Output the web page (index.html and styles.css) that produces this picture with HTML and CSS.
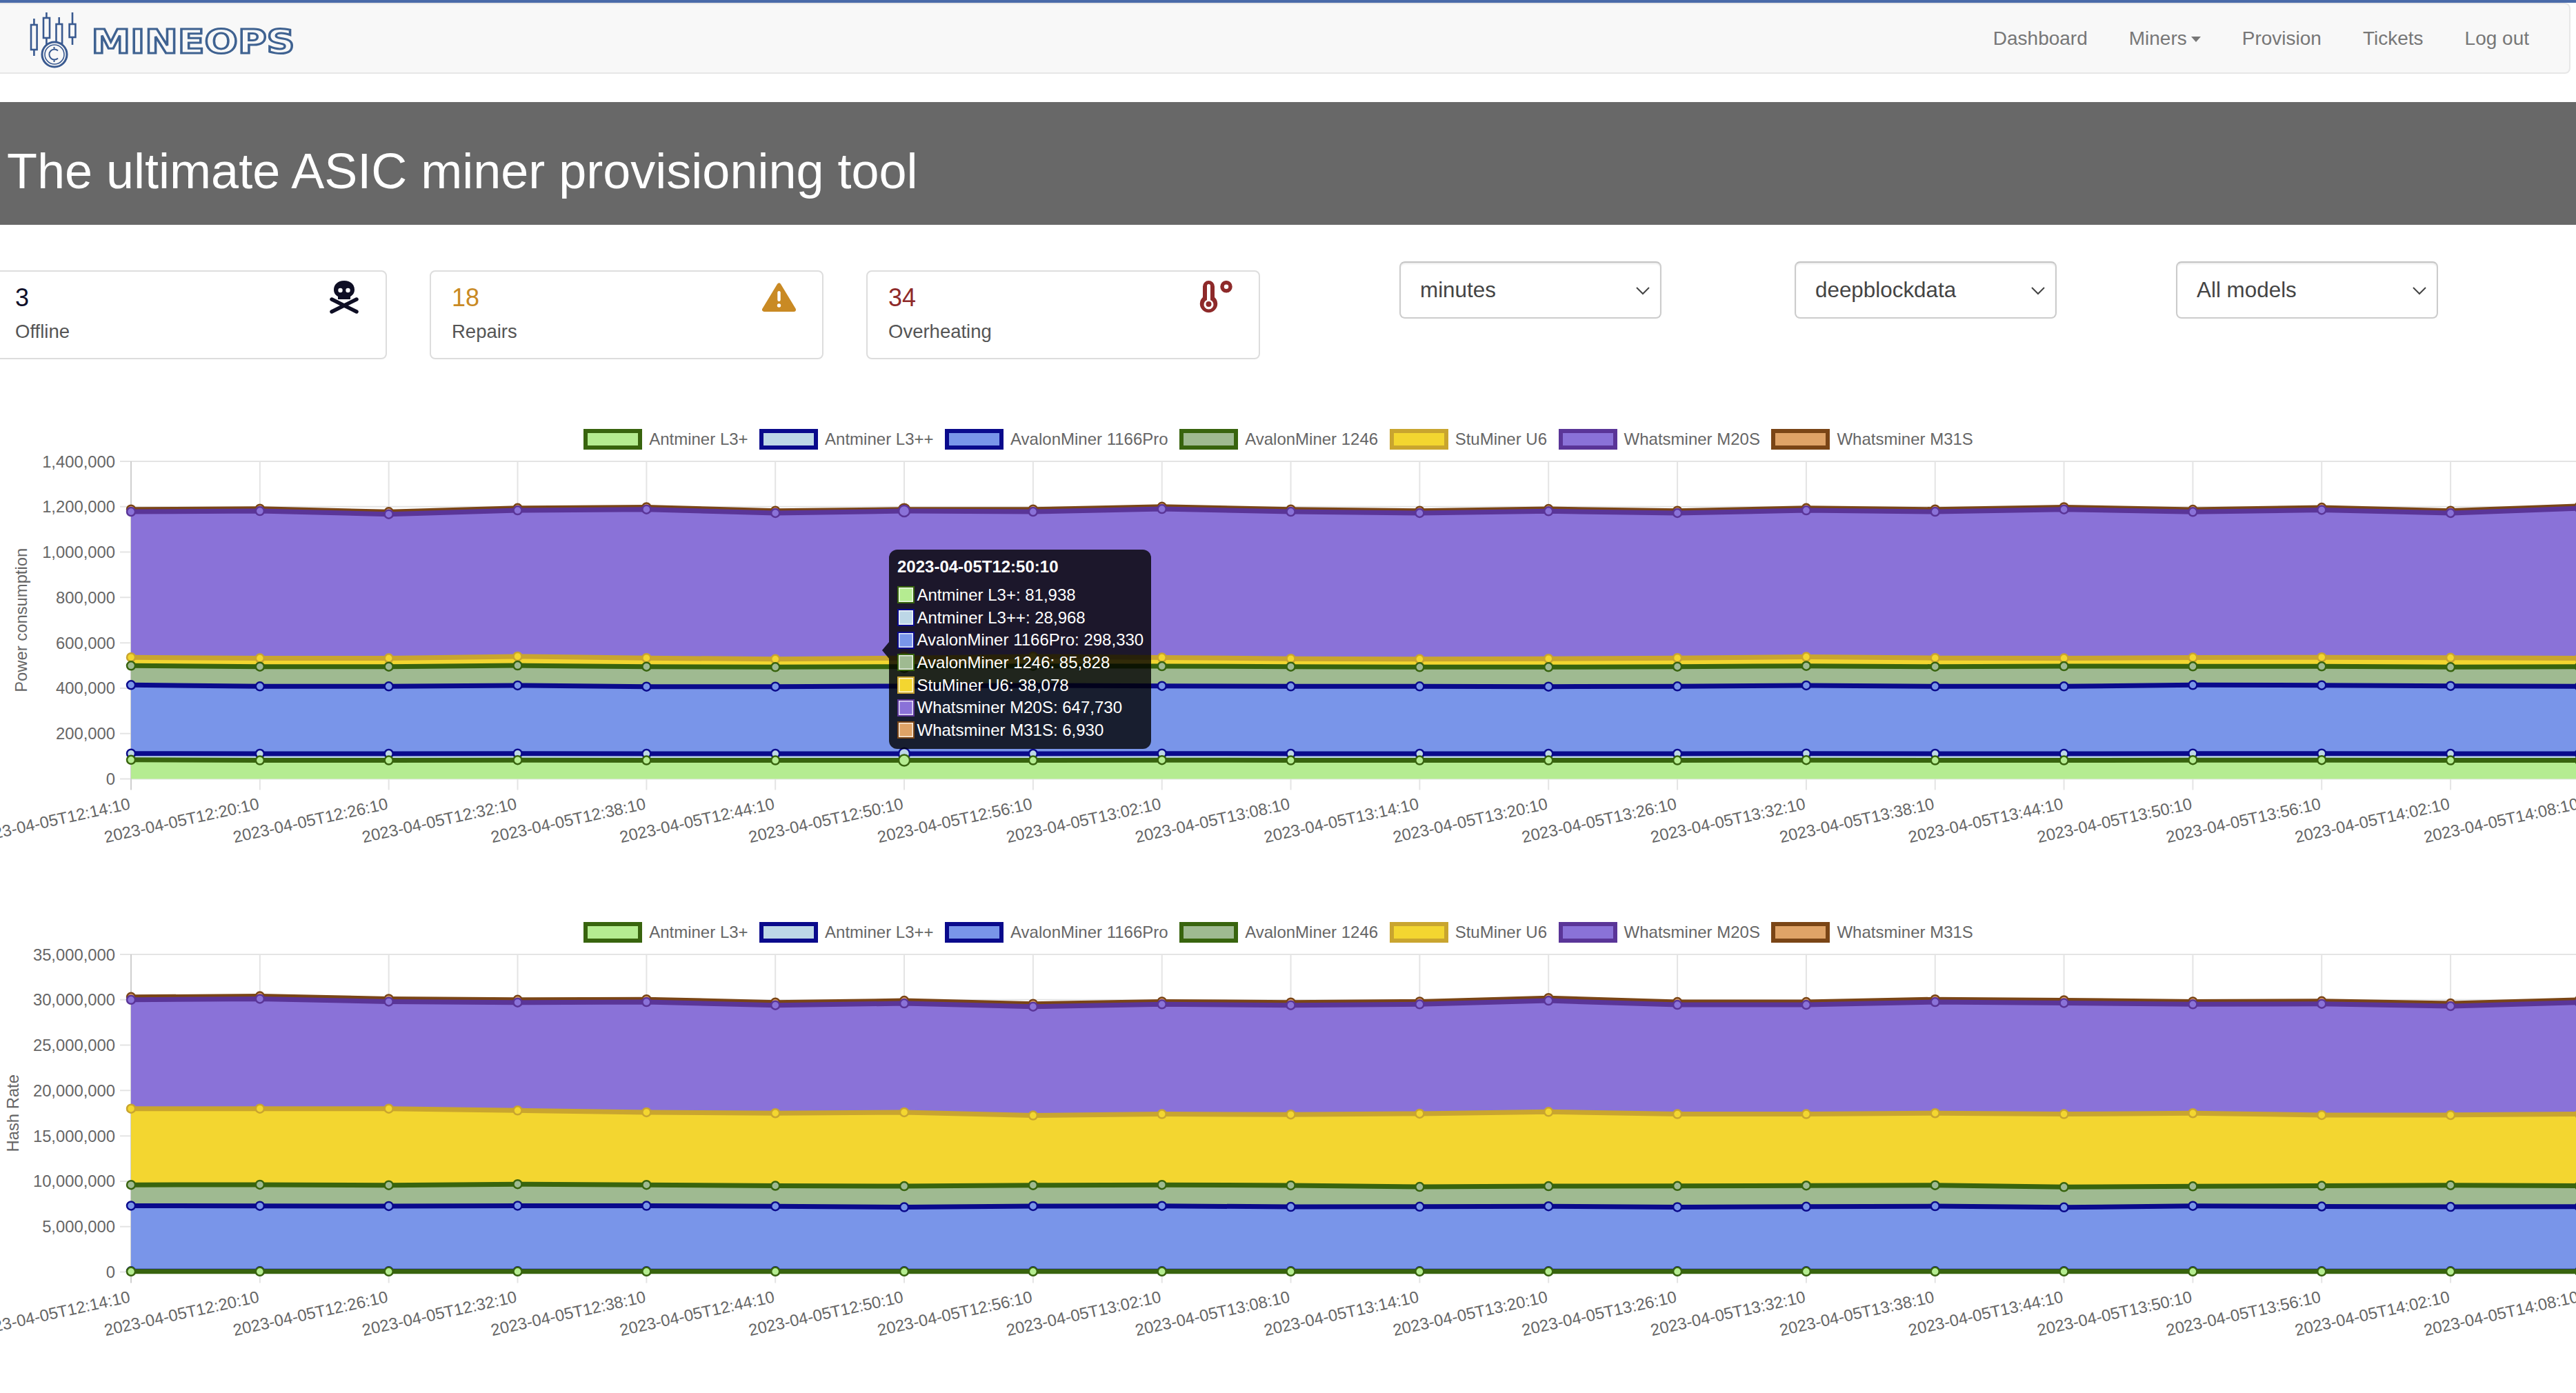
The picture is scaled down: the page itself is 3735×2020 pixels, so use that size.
FILE: index.html
```html
<!DOCTYPE html>
<html lang="en">
<head>
  <meta charset="UTF-8">
  <title>MineOps</title>
  <link rel="stylesheet" href="styles.css">
</head>
<body>

  <div class="topbar"></div>

  <nav class="navbar">
    <svg class="logo" viewBox="0 6 440 99" width="440" height="99">
      <g fill="none" stroke="#3a5a90" stroke-width="2.6">
        <path d="M49.4 27V36M49.4 72V81M67.4 18V26M67.4 55V65M85.7 25V35M85.7 63V70M105 18V35M105 54V65"/>
        <rect x="45" y="36" width="8.6" height="36"/>
        <rect x="63" y="26" width="9" height="29"/>
        <rect x="81.5" y="35" width="8.6" height="28"/>
        <rect x="100.6" y="35" width="8.8" height="19"/>
        <circle cx="79" cy="79" r="18" fill="#f8f8f8" stroke-width="3"/>
        <circle cx="79" cy="79" r="14" stroke-width="1.6"/>
        <path d="M84 73.5A7.5 7.5 0 1 0 84 84.5M78.5 68V71M78.5 87V90" stroke-width="2"/>
      </g>
      <text class="logo-word" x="132.500" y="76.500" textLength="295" lengthAdjust="spacingAndGlyphs">MINEOPS</text>
    </svg>
    <ul class="nav-links">
      <li><a href="#">Dashboard</a></li>
      <li><a href="#">Miners<span class="caret"></span></a></li>
      <li><a href="#">Provision</a></li>
      <li><a href="#">Tickets</a></li>
      <li><a href="#">Log out</a></li>
    </ul>
  </nav>

  <div class="banner">
    <h1>The ultimate ASIC miner provisioning tool</h1>
  </div>

  <div class="stats">
    <div class="stat-card">
      <div>
        <div class="stat-value offline">3</div>
        <div class="stat-label">Offline</div>
      </div>
      <svg class="stat-icon" viewBox="0 0 43 48" width="43" height="48">
        <path fill="#0e0e24" d="M21 0C11.500 0 6 6 6 13C6 18 8.500 21 12 23V27H30V23C33.500 21 36 18 36 13C36 6 30.500 0 21 0Z"/>
        <circle cx="15.500" cy="14" r="3.200" fill="#fff"/>
        <circle cx="26.500" cy="14" r="3.200" fill="#fff"/>
        <path stroke="#0e0e24" stroke-width="5.500" stroke-linecap="round" d="M3 27L39 45M39 27L3 45"/>
      </svg>
    </div>
    <div class="stat-card">
      <div>
        <div class="stat-value repairs">18</div>
        <div class="stat-label">Repairs</div>
      </div>
      <svg class="stat-icon" viewBox="0 0 49 48" width="49" height="48">
        <path fill="#c98a24" stroke="#c98a24" stroke-width="6" stroke-linejoin="round" d="M24.500 6.500L3 42H46Z"/>
        <rect x="22.300" y="15" width="4.400" height="15" rx="2.200" fill="#fff"/>
        <circle cx="24.500" cy="36" r="2.700" fill="#fff"/>
      </svg>
    </div>
    <div class="stat-card">
      <div>
        <div class="stat-value overheating">34</div>
        <div class="stat-label">Overheating</div>
      </div>
      <svg class="stat-icon" viewBox="0 0 48 48" width="48" height="48">
        <path fill="#8e2a2a" d="M5 8.500a8.500 8.500 0 0 1 17 0V24a12.700 12.700 0 1 1-17 0Z"/>
        <path fill="#fff" d="M11 7.500a2.500 2.500 0 0 1 5 0V28a7 7 0 1 1-5 0Z"/>
        <circle cx="13.500" cy="34" r="4" fill="#8e2a2a"/>
        <circle cx="39" cy="8.700" r="6" fill="none" stroke="#8e2a2a" stroke-width="5.500"/>
      </svg>
    </div>
    <div class="filters">
      <select class="filter"><option>minutes</option></select>
      <select class="filter"><option>deepblockdata</option></select>
      <select class="filter"><option>All models</option></select>
    </div>
  </div>

  <!-- Power consumption -->
  <section class="chart-block">
    <ul class="legend">
      <li class="m-l3p">Antminer L3+</li>
      <li class="m-l3pp">Antminer L3++</li>
      <li class="m-a1166">AvalonMiner 1166Pro</li>
      <li class="m-a1246">AvalonMiner 1246</li>
      <li class="m-u6">StuMiner U6</li>
      <li class="m-m20s">Whatsminer M20S</li>
      <li class="m-m31s">Whatsminer M31S</li>
    </ul>
    <svg id="power-chart" class="chart" width="3735" height="650"></svg>

    <div class="chart-tip">
      <div class="tip-title">2023-04-05T12:50:10</div>
      <div class="tip-row m-l3p">Antminer L3+: 81,938</div>
      <div class="tip-row m-l3pp">Antminer L3++: 28,968</div>
      <div class="tip-row m-a1166">AvalonMiner 1166Pro: 298,330</div>
      <div class="tip-row m-a1246">AvalonMiner 1246: 85,828</div>
      <div class="tip-row m-u6">StuMiner U6: 38,078</div>
      <div class="tip-row m-m20s">Whatsminer M20S: 647,730</div>
      <div class="tip-row m-m31s">Whatsminer M31S: 6,930</div>
    </div>
  </section>

  <!-- Hash rate -->
  <section class="chart-block">
    <ul class="legend">
      <li class="m-l3p">Antminer L3+</li>
      <li class="m-l3pp">Antminer L3++</li>
      <li class="m-a1166">AvalonMiner 1166Pro</li>
      <li class="m-a1246">AvalonMiner 1246</li>
      <li class="m-u6">StuMiner U6</li>
      <li class="m-m20s">Whatsminer M20S</li>
      <li class="m-m31s">Whatsminer M31S</li>
    </ul>
    <svg id="hash-chart" class="chart" width="3735" height="650"></svg>
  </section>

  <script src="chart.js"></script>
</body>
</html>
```

FILE: styles.css
```css
/* General */
body {
  font-family: "Liberation Sans", Arial, sans-serif;
  background-color: #ffffff;
  margin: 0;
  padding: 0;
  overflow-x: hidden;
}

.topbar {
  height: 4px;
  background-color: #4a6ba9;
}

/* Navbar */
.navbar {
  display: flex;
  align-items: center;
  justify-content: space-between;
  height: 103px;
  box-sizing: border-box;
  margin: 0 8px 0 -10px;
  background-color: #f8f8f8;
  border: 2px solid #e7e7e7;
  border-radius: 8px;
}

.logo {
  margin-left: 8px;
}

.logo-word {
  font-family: "DejaVu Sans", sans-serif;
  font-weight: bold;
  font-size: 48px;
  fill: #f8f8f8;
  stroke: #3f6291;
  stroke-width: 3px;
}

.nav-links {
  display: flex;
  list-style: none;
  margin: 0 28px 0 0;
  padding: 0;
}

.nav-links a {
  display: block;
  padding: 0 30px;
  color: #777;
  font-size: 28px;
  text-decoration: none;
}

.caret {
  display: inline-block;
  margin-left: 6px;
  vertical-align: middle;
  border-top: 8px solid #777;
  border-left: 7px solid transparent;
  border-right: 7px solid transparent;
}

/* Banner */
.banner {
  display: flex;
  align-items: center;
  height: 178px;
  box-sizing: border-box;
  margin-top: 41px;
  padding: 21px 0 0 10px;
  background-color: #686868;
}

.banner h1 {
  margin: 0;
  color: #fff;
  font-size: 72px;
  font-weight: normal;
}

/* Counters and filters */
.stats {
  display: flex;
  align-items: flex-start;
  gap: 62px;
  height: 274px;
  box-sizing: border-box;
  margin-left: -10px;
  padding-top: 53px;
}

.stat-card {
  display: flex;
  justify-content: space-between;
  width: 571px;
  height: 129px;
  box-sizing: border-box;
  margin-top: 13px;
  padding: 13px 38px 0 30px;
  border: 2px solid #ddd;
  border-radius: 8px;
}

.stat-value {
  margin-top: 5px;
  font-size: 36px;
  line-height: 40px;
}

.stat-value.offline { color: #10102a; }
.stat-value.repairs { color: #c98a24; }
.stat-value.overheating { color: #8e2a2a; }

.stat-label {
  margin-top: 12px;
  color: #555;
  font-size: 27.5px;
  line-height: 34px;
}

.filters {
  display: grid;
  grid-template-columns: 573px 553px 380px;
  margin-left: 140px;
}

.filter {
  width: 380px;
  height: 83px;
  padding: 0 28px;
  appearance: none;
  color: #444;
  font-family: inherit;
  font-size: 31.4px;
  background-color: #fff;
  background-image: url("data:image/svg+xml,%3Csvg xmlns='http://www.w3.org/2000/svg' width='22' height='14' viewBox='0 0 22 14'%3E%3Cpath d='M2 3l9 9 9-9' fill='none' stroke='%23444' stroke-width='2'/%3E%3C/svg%3E");
  background-repeat: no-repeat;
  background-position: right 14px center;
  border: 2px solid #ccc;
  border-top-color: #c4c4c4;
  border-radius: 8px;
  box-shadow: inset 0 2px 2px rgba(0, 0, 0, 0.08);
}

/* Model colours */
.m-l3p { --fill: #b5ec91; --line: #38640e; }
.m-l3pp { --fill: #bdd7e7; --line: #0a0a8c; }
.m-a1166 { --fill: #7995e9; --line: #0a0a8c; }
.m-a1246 { --fill: #9fba91; --line: #38640e; }
.m-u6 { --fill: #f3d630; --line: #c9a52f; }
.m-m20s { --fill: #8a72d8; --line: #5a3598; }
.m-m31s { --fill: #dfa367; --line: #7a4516; }

/* Charts */
.chart-block {
  position: relative;
  height: 702px;
  margin-bottom: 13px;
}

.chart-block:last-child {
  margin-bottom: 0;
}

.legend {
  display: flex;
  justify-content: center;
  gap: 16.5px;
  height: 30px;
  margin: 0;
  padding: 22px 28px 0 0;
  list-style: none;
  color: #666;
  font-size: 24px;
  line-height: 30px;
}

.legend li {
  display: flex;
  gap: 10px;
  align-items: center;
}

.legend li::before {
  content: "";
  width: 85px;
  height: 30px;
  box-sizing: border-box;
  background-color: var(--fill);
  border: 6px solid var(--line);
}

.chart {
  display: block;
}

.chart text {
  fill: #666;
  font-family: "Liberation Sans", Arial, sans-serif;
  font-size: 23.8px;
}

/* Tooltip */
.chart-tip {
  position: absolute;
  left: 1289px;
  top: 197px;
  width: 380px;
  height: 289px;
  box-sizing: border-box;
  padding: 12px 0 0 12px;
  color: #fff;
  font-size: 24px;
  white-space: nowrap;
  background-color: rgba(0, 0, 0, 0.8);
  border-radius: 12px;
}

.chart-tip::before {
  content: "";
  position: absolute;
  left: -10px;
  top: 134px;
  border-top: 12px solid transparent;
  border-bottom: 12px solid transparent;
  border-right: 10px solid rgba(0, 0, 0, 0.8);
}

.tip-title {
  margin-bottom: 11.5px;
  font-weight: bold;
  line-height: 26px;
}

.tip-row {
  display: flex;
  gap: 3.5px;
  align-items: center;
  height: 32.7px;
}

.tip-row::before {
  content: "";
  flex: none;
  width: 25px;
  height: 25px;
  box-sizing: border-box;
  background-color: var(--fill);
  border: 2px solid var(--line);
  box-shadow: inset 0 0 0 1.5px rgba(255, 255, 255, 0.8);
}
```

FILE: chart.js
```js
// Stacked area charts, values are running totals in thousands
const LABELS = [];
for (let i = 0; i < 20; i++) {
  const minutes = 12 * 60 + 14 + i * 6;
  const hh = String(Math.floor(minutes / 60)).padStart(2, '0');
  const mm = String(minutes % 60).padStart(2, '0');
  LABELS.push(`2023-04-05T${hh}:${mm}:10`);
}

const MODELS = [
  { fill: '#b5ec91', line: '#38640e' },
  { fill: '#bdd7e7', line: '#0a0a8c' },
  { fill: '#7995e9', line: '#0a0a8c' },
  { fill: '#9fba91', line: '#38640e' },
  { fill: '#f3d630', line: '#c9a52f' },
  { fill: '#8a72d8', line: '#5a3598' },
  { fill: '#dfa367', line: '#7a4516' }
];

const POWER = [
  [84, 82, 82, 83, 82, 82, 81.9, 82, 83, 82, 82, 82, 82, 83, 82, 82, 83, 83, 82, 82],
  [112, 111, 111, 112, 111, 111, 110.9, 111, 112, 111, 111, 111, 111, 112, 111, 111, 112, 112, 111, 111],
  [414, 408, 408, 412, 407, 407, 409.2, 412, 410, 408, 408, 407, 408, 412, 408, 408, 414, 413, 410, 408],
  [499, 495, 495, 500, 495, 493, 495.1, 498, 497, 495, 493, 493, 495, 498, 495, 497, 496, 496, 493, 495],
  [536, 532, 532, 540, 533, 528, 533.1, 540, 535, 530, 528, 530, 533, 538, 533, 532, 535, 536, 534, 532],
  [1178, 1181, 1167, 1184, 1188, 1172, 1180.9, 1178, 1190, 1178, 1172, 1180, 1172, 1184, 1178, 1188, 1177, 1186, 1172, 1193],
  [1188, 1191, 1177, 1194, 1198, 1182, 1187.8, 1188, 1200, 1188, 1182, 1190, 1182, 1194, 1188, 1198, 1187, 1196, 1182, 1203]
];

const HASH = [
  [50, 50, 50, 50, 50, 50, 50, 50, 50, 50, 50, 50, 50, 50, 50, 50, 50, 50, 50, 50],
  [90, 90, 90, 90, 90, 90, 90, 90, 90, 90, 90, 90, 90, 90, 90, 90, 90, 90, 90, 90],
  [7300, 7280, 7260, 7300, 7290, 7240, 7140, 7260, 7280, 7180, 7200, 7240, 7150, 7200, 7250, 7120, 7280, 7220, 7180, 7200],
  [9600, 9620, 9560, 9680, 9600, 9500, 9460, 9560, 9600, 9540, 9380, 9460, 9480, 9520, 9560, 9360, 9440, 9500, 9560, 9500],
  [18000, 18000, 18000, 17800, 17600, 17500, 17600, 17250, 17400, 17350, 17450, 17650, 17400, 17400, 17500, 17400, 17500, 17300, 17300, 17400],
  [30000, 30100, 29800, 29700, 29750, 29400, 29600, 29250, 29500, 29400, 29500, 29900, 29450, 29450, 29750, 29650, 29500, 29550, 29300, 29700],
  [30300, 30400, 30100, 30000, 30050, 29700, 29900, 29550, 29800, 29700, 29800, 30200, 29750, 29750, 30050, 29950, 29800, 29850, 29600, 30000]
];

const TOP = 17;
const BOTTOM = 477.5;
const LEFT = 190;
const STEP = 186.84;
const LABEL_Y = 521;
const NS = 'http://www.w3.org/2000/svg';

function el(svg, name, attrs, text) {
  const node = document.createElementNS(NS, name);
  Object.keys(attrs).forEach(key => node.setAttribute(key, attrs[key]));
  if (text) node.textContent = text;
  svg.appendChild(node);
  return node;
}

function drawChart(id, stack, max, tickStep, title, titleX, hovered) {
  const svg = document.getElementById(id);
  const xAt = i => LEFT + i * STEP;
  const yAt = v => BOTTOM - (v / max) * (BOTTOM - TOP);

  // Grid and ticks
  for (let v = 0; v <= max; v += tickStep) {
    el(svg, 'line', { x1: 174, x2: 3735, y1: yAt(v), y2: yAt(v), stroke: '#e4e4e4', 'stroke-width': 2 });
    el(svg, 'text', { x: 167, y: yAt(v) + 8.5, 'text-anchor': 'end' }, (v * 1000).toLocaleString('en-US'));
  }
  LABELS.forEach((label, i) => {
    el(svg, 'line', {
      x1: xAt(i), x2: xAt(i), y1: TOP, y2: BOTTOM + 16,
      stroke: i === 0 ? '#cfcfcf' : '#e4e4e4', 'stroke-width': 2
    });
    el(svg, 'text', {
      x: xAt(i), y: LABEL_Y, 'text-anchor': 'end',
      transform: `rotate(-12.4 ${xAt(i)} ${LABEL_Y})`
    }, label);
  });
  el(svg, 'text', {
    x: titleX, y: (TOP + BOTTOM) / 2, 'text-anchor': 'middle',
    transform: `rotate(-90 ${titleX} ${(TOP + BOTTOM) / 2})`
  }, title);

  // Last dataset first, the first one stays on top
  for (let d = MODELS.length - 1; d >= 0; d--) {
    const top = stack[d].map((v, i) => `${xAt(i)},${yAt(v)}`);
    const below = (d > 0 ? stack[d - 1] : stack[d].map(() => 0)).map((v, i) => `${xAt(i)},${yAt(v)}`).reverse();
    el(svg, 'polygon', { points: top.concat(below).join(' '), fill: MODELS[d].fill });
    el(svg, 'polyline', { points: top.join(' '), fill: 'none', stroke: MODELS[d].line, 'stroke-width': 7, 'stroke-linejoin': 'round' });
    stack[d].forEach((v, i) => {
      el(svg, 'circle', {
        cx: xAt(i), cy: yAt(v), r: i === hovered ? 8 : 6,
        fill: MODELS[d].fill, stroke: MODELS[d].line, 'stroke-width': 2.5
      });
    });
  }
}

drawChart('power-chart', POWER, 1400, 200, 'Power consumption', 38.5, 6);
drawChart('hash-chart', HASH, 35000, 5000, 'Hash Rate', 26.5, -1);
```
